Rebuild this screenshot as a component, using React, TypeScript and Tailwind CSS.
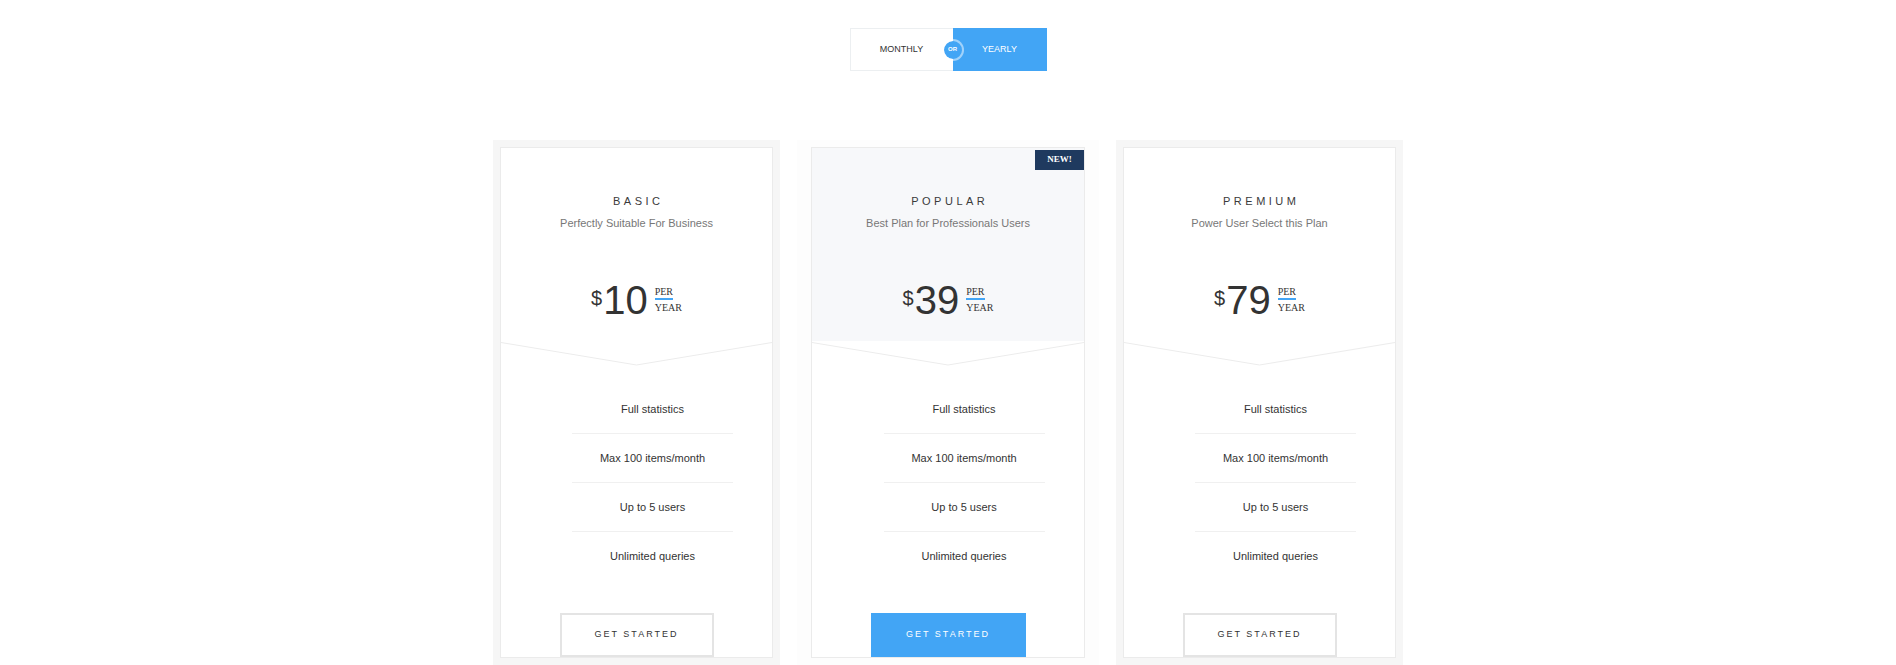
import { useState } from "react";

const plans = [
  { name: "BASIC", tagline: "Perfectly Suitable For Business", price: "10", featured: false },
  { name: "POPULAR", tagline: "Best Plan for Professionals Users", price: "39", featured: true },
  { name: "PREMIUM", tagline: "Power User Select this Plan", price: "79", featured: false },
];

const features = ["Full statistics", "Max 100 items/month", "Up to 5 users", "Unlimited queries"];

const Chevron = () => (
  <svg className="block w-full h-[25px]" viewBox="0 0 100 25" preserveAspectRatio="none">
    <polyline
      points="0,1.5 50,24 100,1.5"
      fill="none"
      stroke="#ececec"
      strokeWidth="1"
      vectorEffect="non-scaling-stroke"
    />
  </svg>
);

const PlanCard = ({ plan }: { plan: (typeof plans)[number] }) => {
  return (
    <div
      className={
        plan.featured
          ? "w-[302px] shrink-0 bg-[#fdfdfd] px-[14px] py-[7px]"
          : "w-[287px] shrink-0 bg-[#f6f6f6] p-[7px]"
      }
    >
      <div className="relative flex flex-col bg-white border border-[#ebebeb]">
        {plan.featured && (
          <span className="absolute top-[2px] right-0 w-[49px] h-[20px] flex items-center justify-center bg-[#1f3a5f] text-white text-[9px] font-bold font-['Liberation_Serif',serif]">
            NEW!
          </span>
        )}
        <div className={plan.featured ? "bg-[#f7f8fa] pt-[47px] pb-[21px]" : "pt-[47px] pb-[21px]"}>
          <h3 className="text-center text-[11px] leading-[13px] tracking-[3.5px] text-[#3a3a3a] pl-[3.5px]">
            {plan.name}
          </h3>
          <p className="mt-[9px] text-center text-[11px] leading-[13px] text-[#777]">{plan.tagline}</p>
          <div className="mt-[50px] flex items-start justify-center">
            <span className="mt-[8px] text-[20px] leading-none text-[#333]">$</span>
            <span className="text-[40px] leading-none text-[#333] ml-[1px]">{plan.price}</span>
            <div className="ml-[7px] mt-[6px] flex flex-col font-['Liberation_Serif',serif] text-[10px] text-[#333]">
              <span className="w-fit leading-[12px] border-b-2 border-[#42a5f5]">PER</span>
              <span className="leading-[12px] mt-[2px]">YEAR</span>
            </div>
          </div>
        </div>
        <Chevron />
        <div className="mt-[19px] pl-[32px] flex justify-center">
          <ul className="w-[161px]">
            {features.map((f, i) => (
              <li
                key={f}
                className={
                  i < features.length - 1
                    ? "h-[49px] flex items-center justify-center border-b border-[#f0f0f0] text-[11px] text-[#333]"
                    : "h-[48px] flex items-center justify-center text-[11px] text-[#333]"
                }
              >
                {f}
              </li>
            ))}
          </ul>
        </div>
        <div className="mt-[33px] flex justify-center">
          {plan.featured ? (
            <button className="w-[155px] h-[44px] bg-[#42a5f5] text-white text-[9px] tracking-[2px] font-medium">
              GET STARTED
            </button>
          ) : (
            <button className="w-[154px] h-[44px] bg-white border-2 border-[#e4e4e4] text-[#333] text-[9px] tracking-[2px]">
              GET STARTED
            </button>
          )}
        </div>
      </div>
    </div>
  );
};

export default function App() {
  const [yearly, setYearly] = useState(true);

  return (
    <div className="min-h-screen bg-white font-['Liberation_Sans',Arial,sans-serif] pt-[28px]">
      <div className="flex justify-center">
        <div className="relative flex h-[43px]">
          <button
            onClick={() => setYearly(false)}
            className={
              yearly
                ? "w-[103px] h-full bg-white border border-r-0 border-[#eceff1] text-[9px] text-[#333]"
                : "w-[103px] h-full bg-[#42a5f5] text-[9px] text-white"
            }
          >
            MONTHLY
          </button>
          <button
            onClick={() => setYearly(true)}
            className={
              yearly
                ? "w-[94px] h-full bg-[#42a5f5] text-[9px] text-white"
                : "w-[94px] h-full bg-white border border-l-0 border-[#eceff1] text-[9px] text-[#333]"
            }
          >
            YEARLY
          </button>
          <span className="absolute left-[92px] top-[10.5px] w-[22px] h-[22px] rounded-full bg-[#42a5f5] border-2 border-[#ffffff80] bg-clip-padding flex items-center justify-center text-[6px] font-bold text-white">
            OR
          </span>
        </div>
      </div>

      <div className="mt-[69px] flex justify-center gap-[17px]">
        {plans.map((p) => (
          <PlanCard key={p.name} plan={p} />
        ))}
      </div>
    </div>
  );
}
